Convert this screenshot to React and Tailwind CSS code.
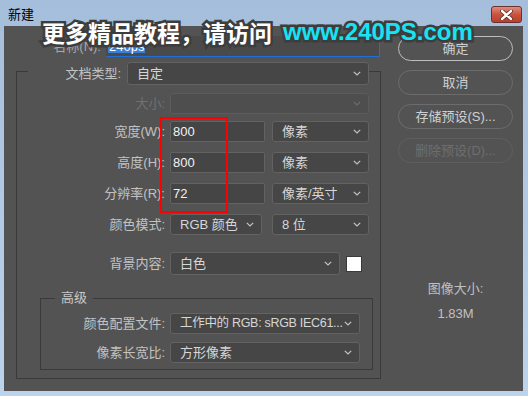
import React from "react";

const font = { fontFamily: '"Liberation Sans", "Noto Sans CJK SC", sans-serif' };

const Chevron = ({ dim }) => (
  <svg width="8" height="5" viewBox="0 0 8 5" className="shrink-0">
    <polyline points="0.8,0.8 4,4 7.2,0.8" fill="none" stroke={dim ? "#6c6c6c" : "#c4c4c4"} strokeWidth="1.2" />
  </svg>
);

const Select = ({ w, text, dim, h = "h-[21px]", tight }) => (
  <div className={`${w} ${h} flex items-center justify-between pl-[9px] pr-[7px] rounded-[3px] border ${dim ? "border-[#5b5b5b] bg-[#4e4e4e]" : "border-[#626262] bg-[#464646]"} ${tight ? "text-[12.5px] tracking-[-0.3px]" : "text-[13px]"} text-[#d6d6d6] shrink-0`}>
    <span className="whitespace-nowrap">{text}</span>
    <Chevron dim={dim} />
  </div>
);

const Input = ({ value }) => (
  <div className="w-[95px] h-[21px] flex items-center pl-[2px] rounded-[2px] border border-[#626262] bg-[#454545] text-[13px] text-[#f2f2f2] shrink-0">
    {value}
  </div>
);

const Row = ({ label, labelW, dim, children, className = "" }) => (
  <div className={`flex items-center gap-[5px] ${className}`}>
    <span className={`${labelW} text-right text-[13px] whitespace-nowrap ${dim ? "text-[#707070]" : "text-[#c2c2c2]"}`}>{label}</span>
    {children}
  </div>
);

const Button = ({ children, primary, disabled }) => {
  let look = "border border-[#6c6c6c] text-[#d0d0d0]";
  if (primary) look = "border-[1.5px] border-[#bdbdbd] text-[#cfcfcf]";
  if (disabled) look = "border border-[#5f5f5f] text-[#6e6e6e]";
  return (
    <div className={`w-[115px] h-[25px] flex items-center justify-center rounded-full text-[13px] ${look}`}>
      {children}
    </div>
  );
};

export default function App() {
  return (
    <div className="relative w-[528px] h-[396px] overflow-hidden bg-gradient-to-b from-[#a4bedb] to-[#bcd3ec]" style={font}>
      {/* title bar */}
      <div className="h-[26px] flex items-start justify-between">
        <span className="ml-[8px] mt-[5px] text-[13px] text-black">新建</span>
        <div className="mt-[6px] mr-[6px] w-[31px] h-[17px] rounded-[3px] border border-[#6b3030] bg-gradient-to-b from-[#e08a7c] via-[#c9533f] to-[#b8402d] flex items-center justify-center">
          <svg width="13" height="10" viewBox="0 0 13 10">
            <path d="M2 1 L11 9 M11 1 L2 9" stroke="#5a2a22" strokeWidth="4" strokeLinecap="round" />
            <path d="M2 1 L11 9 M11 1 L2 9" stroke="#ffffff" strokeWidth="2.4" strokeLinecap="round" />
          </svg>
        </div>
      </div>

      {/* dialog body */}
      <div className="ml-[4px] w-[519px] h-[365px] bg-[#535353] flex">
        <div className="w-[376px] pt-[10px]">
          <div className="flex items-center gap-[5px]">
            <span className="w-[97px] text-right text-[13px] text-[#a8a8a8]">名称(N):</span>
            <div className="w-[274px] h-[21px] flex items-center pl-[1px] border border-[#4a4a4a] border-r-[#1f6fd6] border-b-[#1f6fd6] bg-[#4a4a4a]">
              <span className="bg-[#3a7fd8] text-white text-[13px] leading-[13px] px-[1px]">240ps</span>
            </div>
          </div>

          <fieldset className="ml-[12px] w-[365px] border border-[#3a3a3a] pb-[8px]">
            <legend className="ml-[11px] pt-[5px]">
              <div className="flex items-center gap-[6px]">
                <span className="w-[93px] text-right text-[13px] text-[#c2c2c2]">文档类型:</span>
                <Select w="w-[242px]" h="h-[23px]" text="自定" />
              </div>
            </legend>

            <Row label="大小:" labelW="w-[148px]" dim className="mt-[8px]">
              <Select w="w-[199px]" text="" dim />
            </Row>
            <Row label="宽度(W):" labelW="w-[148px]" className="mt-[7px]">
              <Input value="800" />
              <div className="ml-[2px]"><Select w="w-[97px]" text="像素" /></div>
            </Row>
            <Row label="高度(H):" labelW="w-[148px]" className="mt-[10px]">
              <Input value="800" />
              <div className="ml-[2px]"><Select w="w-[97px]" text="像素" /></div>
            </Row>
            <Row label="分辨率(R):" labelW="w-[148px]" className="mt-[10px]">
              <Input value="72" />
              <div className="ml-[2px]"><Select w="w-[97px]" text="像素/英寸" /></div>
            </Row>
            <Row label="颜色模式:" labelW="w-[148px]" className="mt-[10px]">
              <Select w="w-[92px]" text="RGB 颜色" />
              <div className="ml-[5px]"><Select w="w-[97px]" text="8 位" /></div>
            </Row>
            <Row label="背景内容:" labelW="w-[148px]" className="mt-[17px]">
              <Select w="w-[170px]" h="h-[23px]" text="白色" />
              <div className="ml-[1px] w-[16px] h-[16px] bg-white border border-[#3a3a3a]" />
            </Row>

            <fieldset className="ml-[23px] mt-[14px] w-[333px] border border-[#3a3a3a] pb-[6px]">
              <legend className="ml-[14px] px-[6px] text-[13px] leading-[18px] text-[#c8c8c8]">高级</legend>
              <Row label="颜色配置文件:" labelW="w-[124px]" className="mt-[6px]">
                <Select w="w-[190px]" text="工作中的 RGB: sRGB IEC61..." tight />
              </Row>
              <Row label="像素长宽比:" labelW="w-[124px]" className="mt-[8px]">
                <Select w="w-[190px]" text="方形像素" />
              </Row>
            </fieldset>
          </fieldset>
        </div>

        <div className="flex-1 pt-[10px] pl-[18px] flex flex-col">
          <div className="flex flex-col gap-[9px]">
            <Button primary>确定</Button>
            <Button>取消</Button>
            <Button>存储预设(S)...</Button>
            <Button disabled>删除预设(D)...</Button>
          </div>
          <div className="w-[115px] mt-[116px] flex flex-col items-center text-[13px] text-[#c0c0c0]">
            <span>图像大小:</span>
            <span className="mt-[5px]">1.83M</span>
          </div>
        </div>
      </div>

      {/* red highlight annotation */}
      <div className="absolute left-[160px] top-[117px] w-[68px] h-[96px] border-2 border-[#ff0000]" />

      {/* watermark */}
      <div className="absolute left-[42px] top-[14px] flex items-center whitespace-nowrap font-bold [paint-order:stroke_fill] [-webkit-text-stroke:5px_#3d3d3d]">
        <span className="text-[23px] text-white" style={{ fontFamily: '"Noto Sans CJK SC", sans-serif' }}>更多精品教程，请访问</span>
        <span className="ml-[11px] text-[24px] text-[#16e4f4]" style={{ fontFamily: '"Liberation Sans", sans-serif' }}>www.240PS.com</span>
      </div>
    </div>
  );
}
